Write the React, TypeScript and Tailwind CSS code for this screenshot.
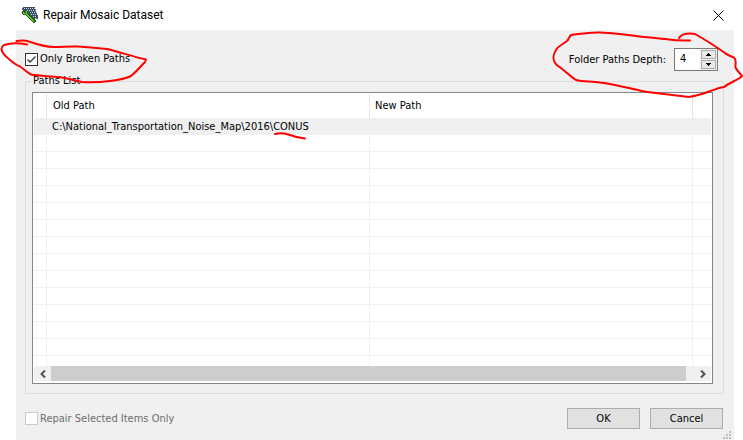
import { useState } from "react";
import type { ReactNode } from "react";

const paths = [
  {
    id: "conus",
    folder: "C:\\National_Transportation_Noise_Map\\2016\\",
    name: "CONUS",
    newPath: "",
  },
];

const emptyRows = Array.from({ length: 14 }, (_, i) => i);

function MosaicIcon() {
  return (
    <svg width="16" height="16" viewBox="0 0 16 16" shapeRendering="crispEdges" aria-hidden="true">
      <path d="M1 0h12v2h1v3h1v3h1v4H8V9H5V7H2V5H1V3H0V1h1z" fill="#3c5068" />
      <path
        d="M2 1h1v1h-1zM4 1h1v1h-1zM6 1h1v1h-1zM8 1h1v1h-1zM10 1h1v1h-1zM12 1h1v1h-1zM5 3h1v1h-1zM7 3h1v1h-1zM9 3h1v1h-1zM11 3h1v1h-1zM13 3h1v1h-1zM8 5h1v1h-1zM10 5h1v1h-1zM12 5h1v1h-1zM14 5h1v1h-1zM9 7h1v1h-1zM11 7h1v1h-1zM13 7h1v1h-1zM11 9h1v1h-1zM13 9h1v1h-1zM13 11h1v1h-1z"
        fill="#c5d6e6"
      />
      <path
        d="M0 4h1v1h2V3h2v1h1v2h1v1h1v1h1v1h1v1h1v1h1v1h1v1h1v2h-1v1h-2v-1h-1v-1H9v-1H8v-1H7v-1H6v-1H5V9H4V8H1V7H0z"
        fill="#1f6414"
      />
      <path
        d="M1 5h1v1h2V4h1v3h1v1h1v1h1v1h1v1h1v1h1v1h1v2h-1v-1h-1v-1H9v-1H8v-1H7v-1H6V9H5V8H4V7H1z"
        fill="#62c52f"
      />
    </svg>
  );
}

function CheckBox({
  label,
  checked,
  disabled,
  onChange,
}: {
  label: string;
  checked: boolean;
  disabled?: boolean;
  onChange?: (checked: boolean) => void;
}) {
  return (
    <label className="flex items-center gap-0.5 has-disabled:text-[#6d6d6d]">
      <span className="relative h-[13px] w-[13px]">
        <input
          type="checkbox"
          checked={checked}
          disabled={disabled}
          onChange={(e) => onChange?.(e.target.checked)}
          className="block h-[13px] w-[13px] appearance-none border border-[#333] bg-white disabled:border-[#ccc]"
        />
        {checked && (
          <svg
            viewBox="0 0 13 13"
            className="pointer-events-none absolute inset-0"
            fill="none"
            stroke="#333"
            strokeWidth="1.3"
            aria-hidden="true"
          >
            <path d="M2.5 6.5L5 9L10.5 3.5" />
          </svg>
        )}
      </span>
      {label}
    </label>
  );
}

function DialogButton({ children }: { children: ReactNode }) {
  return (
    <button
      type="button"
      className="h-[21px] w-[73px] border border-[#adadad] bg-[#e1e1e1] text-center hover:border-[#0078d7] hover:bg-[#e5f1fb]"
    >
      {children}
    </button>
  );
}

export default function App() {
  const [onlyBroken, setOnlyBroken] = useState(true);
  const [depth, setDepth] = useState(4);

  return (
    <div className="relative flex h-screen flex-col overflow-hidden bg-white pl-4 pr-[9px] font-['DejaVu_Sans_Condensed','Noto_Sans',sans-serif] text-[11px] leading-4 text-black">
      {/* Title bar */}
      <header className="flex h-[30px] shrink-0 items-center pl-1.5 pr-2.5">
        <MosaicIcon />
        <h1 className="ml-[5px] flex-1 font-['Roboto',sans-serif] text-[12px]">Repair Mosaic Dataset</h1>
        <button type="button" aria-label="Close">
          <svg width="11" height="11" viewBox="0 0 11 11" fill="none" stroke="#000" aria-hidden="true">
            <path d="M0.5 0.5L10.5 10.5M10.5 0.5L0.5 10.5" />
          </svg>
        </button>
      </header>

      <main className="relative flex min-h-0 flex-1 flex-col bg-[#f0f0f0] pb-[11px] pl-[9px] pr-2.5">
        {/* Options */}
        <div className="flex h-[43px] shrink-0 items-start justify-between pt-[18px] pr-1.5">
          <div className="pt-[3px]">
            <CheckBox label="Only Broken Paths" checked={onlyBroken} onChange={setOnlyBroken} />
          </div>
          <div className="flex items-center gap-2">
            <label htmlFor="depth">Folder Paths Depth:</label>
            <div className="flex h-[23px] w-11 border border-[#7a7a7a] bg-white">
              <input
                id="depth"
                type="text"
                inputMode="numeric"
                value={depth}
                onChange={(e) => setDepth(Number(e.target.value) || 0)}
                className="h-[18px] w-[25px] pl-[5px] outline-none"
              />
              <div className="flex flex-1 flex-col gap-px bg-[#f0f0f0] p-px">
                <button
                  type="button"
                  aria-label="Increase depth"
                  onClick={() => setDepth(depth + 1)}
                  className="flex flex-1 items-center justify-center border border-[#acacac] bg-[#e8e8e8]"
                >
                  <svg width="5" height="3" viewBox="0 0 5 3" shapeRendering="crispEdges" aria-hidden="true">
                    <path d="M2 0h1v1h1v1h1v1H0V2h1V1h1z" />
                  </svg>
                </button>
                <button
                  type="button"
                  aria-label="Decrease depth"
                  onClick={() => setDepth(Math.max(0, depth - 1))}
                  className="flex flex-1 items-center justify-center border border-[#acacac] bg-[#e8e8e8]"
                >
                  <svg width="5" height="3" viewBox="0 0 5 3" shapeRendering="crispEdges" aria-hidden="true">
                    <path d="M0 0h5v1H4v1H3v1H2V2H1V1H0z" />
                  </svg>
                </button>
              </div>
            </div>
          </div>
        </div>

        {/* Paths list */}
        <fieldset className="flex min-h-0 min-w-0 flex-1 flex-col border border-[#dcdcdc] pb-[9px] pl-1.5 pr-2.5">
          <legend className="px-px">Paths List</legend>
          <div className="mt-[3px] flex min-h-0 flex-1 flex-col border border-[#828790] bg-white p-px">
            <div className="min-h-0 flex-1 overflow-hidden">
              <table className="w-full table-fixed border-separate border-spacing-0 text-left">
                <colgroup>
                  <col className="w-[13px]" />
                  <col />
                  <col />
                  <col className="w-[18px]" />
                </colgroup>
                <thead>
                  <tr className="h-6 *:border-r *:border-[#e5e5e5] *:p-0 *:font-normal">
                    <td />
                    <th>
                      <span className="pl-1.5">Old Path</span>
                    </th>
                    <th>
                      <span className="pl-[5px]">New Path</span>
                    </th>
                    <td className="border-r-0!" />
                  </tr>
                </thead>
                <tbody>
                  {paths.map((path) => (
                    <tr key={path.id} className="h-[17px] bg-[#f0f0f0] *:p-0">
                      <td />
                      <td className="whitespace-nowrap pl-[5px]!">
                        {path.folder}
                        <span className="relative">
                          {path.name}
                          <svg
                            viewBox="0 0 33 7"
                            className="absolute left-0 top-[13px] h-[7px] w-[33px] overflow-visible"
                            fill="none"
                            stroke="#ff0000"
                            strokeWidth="2"
                            strokeLinecap="round"
                            aria-hidden="true"
                          >
                            <path d="M2 1C7 0 12 0 17 2C22 4 26 5 32 5.5" />
                          </svg>
                        </span>
                      </td>
                      <td>{path.newPath}</td>
                      <td />
                    </tr>
                  ))}
                  {emptyRows.map((row) => (
                    <tr key={row} className="h-[17px] *:border-b *:border-r *:border-[#f0f0f0] *:p-0">
                      <td />
                      <td />
                      <td />
                      <td className="border-r-0!" />
                    </tr>
                  ))}
                </tbody>
              </table>
            </div>

            {/* Horizontal scroll bar */}
            <div className="mb-px flex h-[15px] shrink-0 items-center bg-[#f0f0f0]">
              <button type="button" aria-label="Scroll left" className="flex h-full w-[17px] items-center justify-center">
                <svg width="6" height="8" viewBox="0 0 6 8" fill="none" stroke="#505050" strokeWidth="2" aria-hidden="true">
                  <path d="M5 0.5L1.5 4L5 7.5" />
                </svg>
              </button>
              <div className="mr-2 h-full flex-1 bg-[#cdcdcd]" />
              <button type="button" aria-label="Scroll right" className="flex h-full w-[17px] items-center justify-center">
                <svg width="6" height="8" viewBox="0 0 6 8" fill="none" stroke="#505050" strokeWidth="2" aria-hidden="true">
                  <path d="M1 0.5L4.5 4L1 7.5" />
                </svg>
              </button>
            </div>
          </div>
        </fieldset>

        {/* Footer */}
        <footer className="mt-[14px] flex shrink-0 items-center gap-2.5 pr-px">
          <div className="flex-1">
            <CheckBox label="Repair Selected Items Only" checked={false} disabled />
          </div>
          <DialogButton>OK</DialogButton>
          <DialogButton>Cancel</DialogButton>
        </footer>

        <svg
          width="8"
          height="8"
          viewBox="0 0 8 8"
          className="absolute bottom-px right-[3px]"
          fill="#bfbfbf"
          shapeRendering="crispEdges"
          aria-hidden="true"
        >
          <path d="M6 0h2v2h-2zM3 3h2v2h-2zM6 3h2v2h-2zM0 6h2v2h-2zM3 6h2v2h-2zM6 6h2v2h-2z" />
        </svg>
      </main>

      {/* Pen marks */}
      <svg
        width="150"
        height="100"
        viewBox="0 0 150 100"
        className="pointer-events-none absolute left-0 top-0"
        fill="none"
        stroke="#ff0000"
        strokeWidth="2"
        strokeLinecap="round"
        strokeLinejoin="round"
        aria-hidden="true"
      >
        <path d="M16.500 41C20 40.500 26 40.500 29 41.500C36 44 45 47 54 47C62 47 70 46 78 46.500C88 47 98 48 107 49C120 52 134 57 146 59.500L145 62C141 66 136 72 131 76C125 79 118 80 110 81C102 82 90 82.500 82 82C74 80 66 78 59 77C49 76 38 76 31 74.500C26 72 24 69 20 66.500C14 64 5 56 3 53C1 50 1 47 4 45C10 43 20 43 27 44.500" />
      </svg>
      <svg
        width="193"
        height="100"
        viewBox="550 0 193 100"
        className="pointer-events-none absolute right-0 top-0"
        fill="none"
        stroke="#ff0000"
        strokeWidth="2"
        strokeLinecap="round"
        strokeLinejoin="round"
        aria-hidden="true"
      >
        <path d="M690 40.500C680 41 672 40 665 39C655 38 644 37 636 36C622 34 612 33 600 32.500C589 32 580 34 571 35C569 37 569 39 567 41C563 44 558 46 556 50C552 56 553 62 558 66C563 69 570 76 576 80C583 82 592 81 600 82.500C614 84 628 88 642 91C658 94 675 95 688 97C702 96 712 89 724 87C730 82 737 81 742 76C740 73 736 70 735.500 67C735 64 737 60 734 57.500C730 56 727 55 725 53C715 46 704 39 695 34C690 33 682 33 679 38" />
      </svg>
    </div>
  );
}
